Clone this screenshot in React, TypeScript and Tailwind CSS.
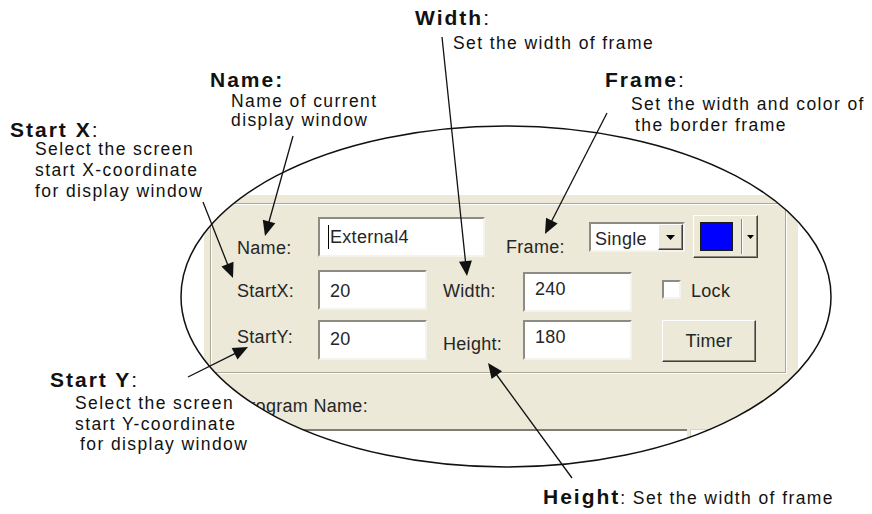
import React from 'react';

const field =
  'bg-white border-2 border-t-[#8d8b82] border-l-[#8d8b82] border-r-[#f4f3ee] border-b-[#f4f3ee]';
const raised =
  'bg-[#ece9d8] border border-t-white border-l-white border-r-[#404040] border-b-[#404040] shadow-[inset_-1px_-1px_0_#8a887e]';
const note = 'text-[17.5px] tracking-[1.4px]';
const head = 'text-[21px] leading-[21px] tracking-[2px]';

type ArrowProps = { x1: number; y1: number; x2: number; y2: number };

// line with a filled head at (x2, y2)
const Arrow: React.FC<ArrowProps> = ({ x1, y1, x2, y2 }) => {
  const dx = x2 - x1;
  const dy = y2 - y1;
  const len = Math.hypot(dx, dy);
  const ux = dx / len;
  const uy = dy / len;
  const L = 15;
  const W = 6.5;
  const bx = x2 - ux * L;
  const by = y2 - uy * L;
  const pts = `${x2},${y2} ${bx - uy * W},${by + ux * W} ${bx + uy * W},${by - ux * W}`;
  return (
    <g>
      <line x1={x1} y1={y1} x2={bx + ux * 2} y2={by + uy * 2} stroke="#111" strokeWidth={1.3} />
      <polygon points={pts} fill="#111" />
    </g>
  );
};

const DownTri: React.FC<{ w: number; h: number }> = ({ w, h }) => (
  <svg width={w} height={h} viewBox={`0 0 ${w} ${h}`}>
    <polygon points={`0,0 ${w},0 ${w / 2},${h}`} fill="#000" />
  </svg>
);

const App: React.FC = () => {
  return (
    <div className="relative w-[872px] h-[514px] bg-white overflow-hidden font-['Liberation_Sans',Arial,sans-serif] text-[#111]">
      {/* dialog screenshot, cut out by the ellipse */}
      <div className="absolute inset-0 [clip-path:ellipse(325px_170.5px_at_506px_296.5px)]">
        <div className="ml-[204px] mt-[195px] w-[594px] h-[319px] bg-[#ece9d8] pt-[8px] text-[18px] leading-[20px] tracking-[0.3px] text-[#262626]">
          <div className="ml-[6px] w-[576px] border border-[#aca899] shadow-[inset_1px_1px_0_#fff,1px_1px_0_#fff] pl-[26px] pt-[11px] pb-[10px]">
            <div className="flex items-start h-[43px]">
              <div className="w-[81px] mt-[23px]">Name:</div>
              <div className={`${field} w-[167px] h-[40px] mt-[2px] pl-[8px] pt-[6px] flex items-start`}>
                <span className="inline-block w-px h-[24px] bg-black" />
                <span className="mt-[2px] ml-px">External4</span>
              </div>
              <div className="ml-[21px] w-[83px] mt-[22px]">Frame:</div>
              <div className={`${field} mt-[7px] w-[96px] h-[30px] flex`}>
                <div className="flex-1 pl-[4px] pt-[5px]">Single</div>
                <div className={`${raised} w-[25px] h-full flex items-center justify-center`}>
                  <DownTri w={9} h={5} />
                </div>
              </div>
              <div className={`${raised} ml-[8px] w-[65px] h-[43px] flex items-center`}>
                <div className="ml-[6px] w-[33px] h-[29px] bg-[#0000ff] border border-[#1a1a1a]" />
                <div className="ml-[8px] w-[2px] h-[35px] border-l border-l-[#8a887e] border-r border-r-white" />
                <div className="ml-[4px] flex">
                  <DownTri w={7} h={4} />
                </div>
              </div>
            </div>

            <div className="flex items-start h-[42px] mt-[12px]">
              <div className="w-[81px] mt-[11px]">StartX:</div>
              <div className={`${field} w-[109px] h-[40px] pl-[10px] pt-[9px]`}>20</div>
              <div className="ml-[16px] w-[80px] mt-[11px]">Width:</div>
              <div className={`${field} mt-[2px] w-[109px] h-[40px] pl-[10px] pt-[5px]`}>240</div>
              <div className={`${field} ml-[30px] mt-[10px] w-[19px] h-[19px]`} />
              <div className="ml-[10px] mt-[11px]">Lock</div>
            </div>

            <div className="flex items-start h-[42px] mt-[8px]">
              <div className="w-[81px] mt-[7px]">StartY:</div>
              <div className={`${field} w-[109px] h-[40px] pl-[10px] pt-[7px]`}>20</div>
              <div className="ml-[16px] w-[80px] mt-[14px]">Height:</div>
              <div className={`${field} w-[109px] h-[40px] pl-[10px] pt-[5px]`}>180</div>
              <div className={`${raised} ml-[30px] w-[94px] h-[42px] flex items-center justify-center`}>Timer</div>
            </div>
          </div>

          <div className="ml-[33px] mt-[23px]">Program Name:</div>
          <div className="flex mt-[13px]">
            <div className="ml-[8px] w-[475px] h-[60px] bg-white border-t-2 border-t-[#7f7d74]" />
            <div className="ml-[3px] w-[95px] h-[60px] bg-white border border-[#d6d4ca]" />
          </div>
        </div>
      </div>

      {/* ellipse and arrows */}
      <svg className="absolute inset-0 pointer-events-none" width={872} height={514}>
        <ellipse cx={506} cy={296.5} rx={325} ry={170.5} fill="none" stroke="#111" strokeWidth={1.5} />
        <Arrow x1={293} y1={136} x2={265} y2={236} />
        <Arrow x1={203} y1={202} x2={233} y2={278} />
        <Arrow x1={188} y1={377} x2={248} y2={347} />
        <Arrow x1={442} y1={37} x2={467} y2={276} />
        <Arrow x1={607} y1={113} x2={545} y2={234} />
        <Arrow x1={572} y1={478} x2={488} y2={363} />
      </svg>

      {/* annotations */}
      <div className={`absolute left-[415px] top-[7px] ${head}`}>
        <span className="font-bold">Width</span>:
      </div>
      <div className={`absolute left-[453px] top-[33px] leading-[20px] ${note}`}>Set the width of frame</div>

      <div className={`absolute left-[210px] top-[69px] font-bold ${head}`}>Name:</div>
      <div className={`absolute left-[231px] top-[92px] leading-[19px] ${note}`}>
        <div>Name of current</div>
        <div>display window</div>
      </div>

      <div className={`absolute left-[605px] top-[69px] ${head}`}>
        <span className="font-bold">Frame</span>:
      </div>
      <div className={`absolute left-[631px] top-[94px] leading-[21px] ${note}`}>
        <div>Set the width and color of</div>
        <div className="pl-[4px]">the border frame</div>
      </div>

      <div className={`absolute left-[10px] top-[119px] ${head}`}>
        <span className="font-bold">Start X</span>:
      </div>
      <div className={`absolute left-[35px] top-[139px] leading-[21px] ${note}`}>
        <div>Select the screen</div>
        <div>start X-coordinate</div>
        <div>for display window</div>
      </div>

      <div className={`absolute left-[50px] top-[369px] ${head}`}>
        <span className="font-bold">Start Y</span>:
      </div>
      <div className={`absolute left-[75px] top-[393px] leading-[20.5px] ${note}`}>
        <div>Select the screen</div>
        <div>start Y-coordinate</div>
        <div className="pl-[5px]">for display window</div>
      </div>

      <div className="absolute left-[543px] top-[485px] flex items-baseline">
        <span className="text-[21px] leading-[21px] tracking-[2px] font-bold">Height</span>
        <span className={note}>: Set the width of frame</span>
      </div>
    </div>
  );
};

export default App;
